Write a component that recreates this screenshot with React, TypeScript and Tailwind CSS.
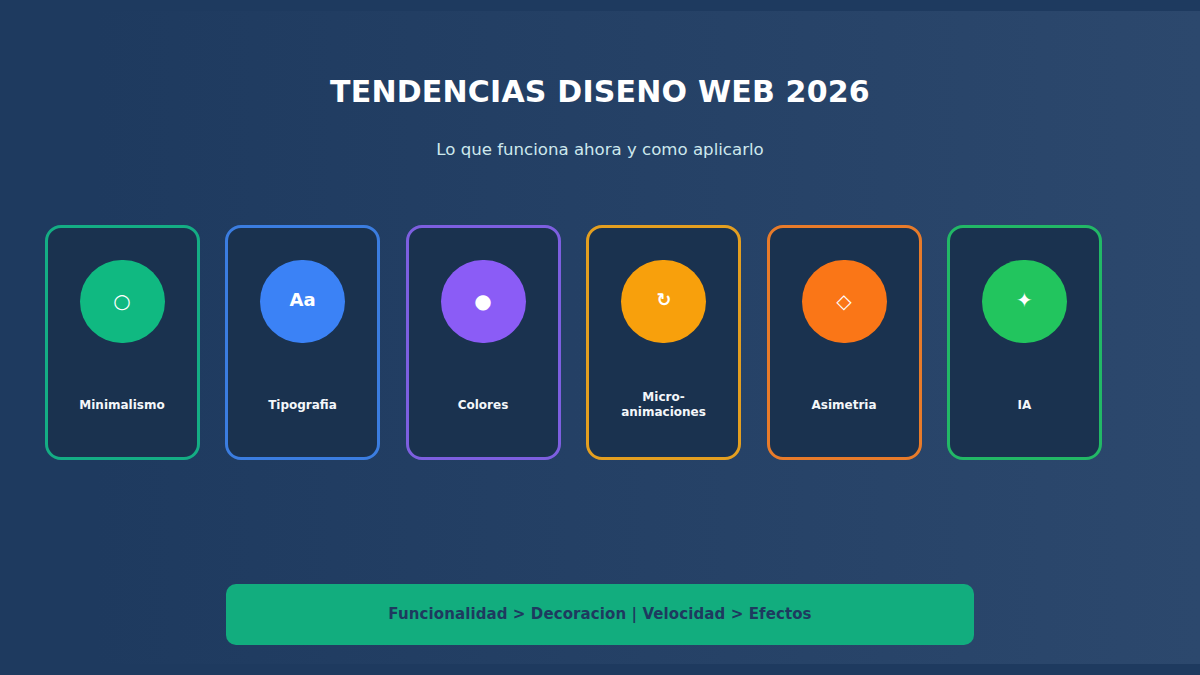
const trends = [
  { label: "Minimalismo", glyph: "○", border: "border-[#14ad84]", fill: "bg-[#10b981]", glyphClass: "text-[20px] font-normal pb-[2px]" },
  { label: "Tipografia", glyph: "Aa", border: "border-[#3b7de0]", fill: "bg-[#3b82f6]", glyphClass: "text-[18px] font-bold pb-[4px]" },
  { label: "Colores", glyph: "●", border: "border-[#7d5fe0]", fill: "bg-[#8b5cf6]", glyphClass: "text-[20px] font-normal pb-[2px]" },
  { label: "Micro-\nanimaciones", glyph: "↻", border: "border-[#e49f20]", fill: "bg-[#f8a00c]", glyphClass: "text-[18px] font-bold pb-[4px] pl-[1px]" },
  { label: "Asimetria", glyph: "◇", border: "border-[#e87b2a]", fill: "bg-[#fa7617]", glyphClass: "text-[20px] font-normal pb-[2px]" },
  { label: "IA", glyph: "✦", border: "border-[#22b866]", fill: "bg-[#22c55e]", glyphClass: "text-[20px] font-normal pb-[4px]" },
];

function TrendCard({ label, glyph, border, fill, glyphClass }: (typeof trends)[number]) {
  return (
    <div className={`flex h-[235px] w-[155px] flex-col items-center rounded-[16px] border-[3px] bg-[#1a324f] pt-[32px] ${border}`}>
      <div className={`flex h-[83px] w-[85px] items-center justify-center rounded-full text-white ${fill} ${glyphClass}`}>
        {glyph}
      </div>
      <div className="mt-[29px] flex h-[66px] items-center justify-center whitespace-pre-line text-center text-[12px] leading-[15px] font-bold text-[#f4f7fa]">
        {label}
      </div>
    </div>
  );
}

export default function App() {
  return (
    <div className="h-[675px] w-[1200px] overflow-hidden bg-[#1e3a5f] py-[11px] font-['DejaVu_Sans',sans-serif]">
      <div className="flex h-[653px] flex-col bg-linear-to-r from-[#1e3a5f] from-[8%] to-[#2c486d]">
        <h1 className="mt-[62px] text-center text-[30px] leading-[38px] font-bold tracking-[0.2px] text-white">
          TENDENCIAS DISENO WEB 2026
        </h1>
        <p className="mt-[29px] text-center text-[16.6px] leading-[20px] text-[#cde8ed]">
          Lo que funciona ahora y como aplicarlo
        </p>
        <div className="mt-[65px] flex gap-[25.5px] pl-[44.5px]">
          {trends.map((trend) => (
            <TrendCard key={trend.label} {...trend} />
          ))}
        </div>
        <div className="mx-auto mt-[124px] flex h-[61px] w-[748px] items-center justify-center rounded-[10px] bg-[#12ad7e] text-[15px] font-bold tracking-[0.1px] text-[#1e3a5f]">
          Funcionalidad &gt; Decoracion | Velocidad &gt; Efectos
        </div>
      </div>
    </div>
  );
}
